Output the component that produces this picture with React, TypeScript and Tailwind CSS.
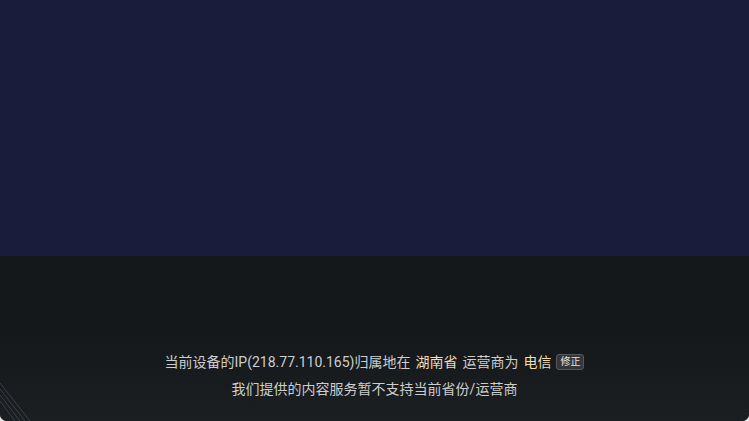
export default function App() {
  return (
    <div className="w-[749px] h-[421px] bg-[#e8e8e8]" style={{ fontFamily: 'Roboto, "Noto Sans CJK SC", sans-serif' }}>
      <div className="w-full h-full rounded-b-[7px] overflow-hidden flex flex-col bg-[#15191c]">
        {/* hero area */}
        <div className="h-[256px] bg-[#1a1c3c]" />

        {/* notice */}
        <div className="relative flex-1 flex flex-col bg-gradient-to-b from-[#14181b] from-[45%] to-[#1b1f22]">
          <div className="flex-1" />
          <div className="flex flex-col items-center gap-[9px] pb-[23px] text-[14px] leading-[18px] text-[#cdcdcd]">
            <div className="flex items-center">
              <span>当前设备的IP(218.77.110.165)归属地在</span>
              <span className="ml-[5px] text-[#f3dcb6]">湖南省</span>
              <span className="ml-[5px]">运营商为</span>
              <span className="ml-[5px] text-[#f3dcb6]">电信</span>
              <span className="ml-[5px] px-[3px] h-[16px] flex items-center rounded-[3px] border border-[#55595c] bg-[#33373a] text-[10px] text-[#e4e4e4]">
                修正
              </span>
            </div>
            <div>我们提供的内容服务暂不支持当前省份/运营商</div>
          </div>
          <svg className="absolute left-0 bottom-0" width="34" height="46" viewBox="0 0 34 46">
            <g stroke="#3a3f44" strokeWidth="1" fill="none">
              <line x1="0" y1="8" x2="30" y2="46" />
              <line x1="0" y1="14" x2="25" y2="46" />
              <line x1="0" y1="20" x2="20" y2="46" />
              <line x1="0" y1="26" x2="15" y2="46" />
            </g>
          </svg>
        </div>
      </div>
    </div>
  )
}
